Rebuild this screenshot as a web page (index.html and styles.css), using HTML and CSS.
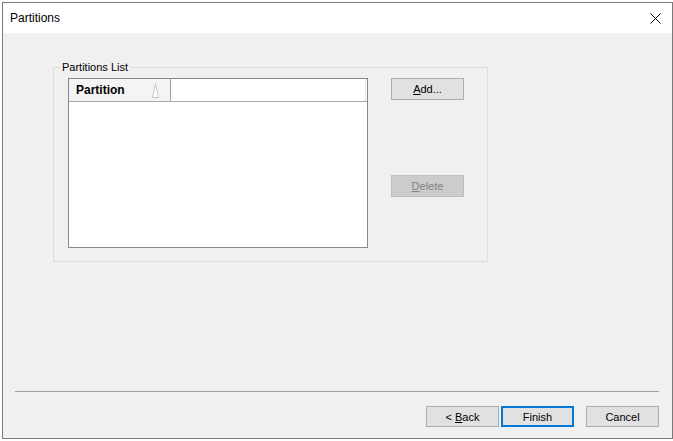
FILE: index.html
```html
<!DOCTYPE html>
<html>
<head>
<meta charset="utf-8">
<title>Partitions</title>
<link rel="stylesheet" href="styles.css">
</head>
<body>
<div class="window">
  <div class="titlebar">
    <span class="title">Partitions</span>
    <svg class="close" width="11" height="11" viewBox="0 0 11 11"><path d="M0.5 0.5 L10.5 10.5 M10.5 0.5 L0.5 10.5" stroke="#000" stroke-width="1" fill="none"/></svg>
  </div>
  <div class="client">
    <fieldset class="group">
      <legend>Partitions List</legend>
      <div class="group-body">
        <div class="listview">
          <div class="lv-header">
            <div class="lv-col sorted">
              <span class="lv-col-text">Partition</span>
              <svg class="sort" width="7" height="15" viewBox="0 0 7 15"><path d="M3.5 0.5 L6.5 14.5 L0.5 14.5 Z" fill="#fff" stroke="#c4c4c4" stroke-width="1"/></svg>
            </div>
            <div class="lv-col-sep"></div>
            <div class="lv-rest"></div>
          </div>
          <div class="lv-body"></div>
        </div>
        <div class="side">
          <button class="btn"><u>A</u>dd...</button>
          <button class="btn disabled delete"><u>D</u>elete</button>
        </div>
      </div>
    </fieldset>
    <div class="sep"></div>
    <div class="actions">
      <button class="btn"><span>&lt; <u>B</u>ack</span></button>
      <button class="btn default">Finish</button>
      <button class="btn">Cancel</button>
    </div>
  </div>
</div>
</body>
</html>
```
FILE: styles.css
```css
html, body {
  margin: 0;
  padding: 0;
  background: #ffffff;
}

body {
  font-family: "Liberation Sans", Arial, sans-serif;
  font-size: 11px;
  color: #000;
}

.window {
  margin: 2px 0 0 2px;
  width: 671px;
  height: 437px;
  box-sizing: border-box;
  border: 1px solid #7a7a7a;
  display: flex;
  flex-direction: column;
}

.titlebar {
  height: 30px;
  background: #ffffff;
  display: flex;
  align-items: center;
  justify-content: space-between;
  padding-left: 7px;
  flex: none;
}

.title {
  font-size: 12px;
}

.close {
  margin-right: 11px;
  display: block;
}

.client {
  flex: 1;
  background: #f0f0f0;
  display: flex;
  flex-direction: column;
}

.group {
  margin: 28px 0 0 50px;
  width: 435px;
  height: 201px;
  box-sizing: border-box;
  border: 1px solid #dcdcdc;
  padding: 4px 0 0 0;
  min-width: 0;
}

.group legend {
  margin-left: 6px;
  padding: 0 2px;
  font-size: 11px;
  line-height: 13px;
}

.group-body {
  display: flex;
  gap: 23px;
  align-items: flex-start;
  padding-left: 14px;
}

.listview {
  width: 300px;
  height: 170px;
  box-sizing: border-box;
  border: 1px solid #828790;
  background: #fff;
  display: flex;
  flex-direction: column;
}

.lv-header {
  height: 23px;
  box-sizing: border-box;
  display: flex;
  border-bottom: 1px solid #a9a9a9;
  flex: none;
}

.lv-col {
  width: 101px;
  background: #f4f4f4;
  display: flex;
  align-items: center;
  padding-left: 7px;
  padding-right: 11px;
  box-sizing: border-box;
}

.lv-col-text {
  font-weight: bold;
  font-size: 12px;
}

.sort {
  margin-left: auto;
  display: block;
}

.lv-col-sep {
  width: 1px;
  background: #a0a0a0;
}

.lv-rest {
  flex: 1;
  background: #fff;
  border-right: 1px solid #e3e3e3;
  margin-right: 1px;
}

.lv-body {
  flex: 1;
  background: #fff;
}

.side {
  display: flex;
  flex-direction: column;
}

.btn {
  width: 73px;
  height: 22px;
  box-sizing: border-box;
  background: #e1e1e1;
  border: 1px solid #adadad;
  font-family: "Liberation Sans", Arial, sans-serif;
  font-size: 11px;
  color: #000;
  padding: 0;
  margin: 0;
  border-radius: 0;
}

.btn.disabled {
  background: #cccccc;
  border-color: #bfbfbf;
  color: #838383;
}

.delete {
  margin-top: 75px;
}

.sep {
  margin: auto 13px 0 12px;
  height: 1px;
  background: #a0a0a0;
  flex: none;
}

.actions {
  display: flex;
  justify-content: flex-end;
  gap: 2px;
  margin: 14px 13px 11px 0;
}

.actions .btn {
  height: 21px;
}

.actions .btn + .btn + .btn {
  margin-left: 10px;
}

.btn.default {
  border: 2px solid #0078d7;
}
```
